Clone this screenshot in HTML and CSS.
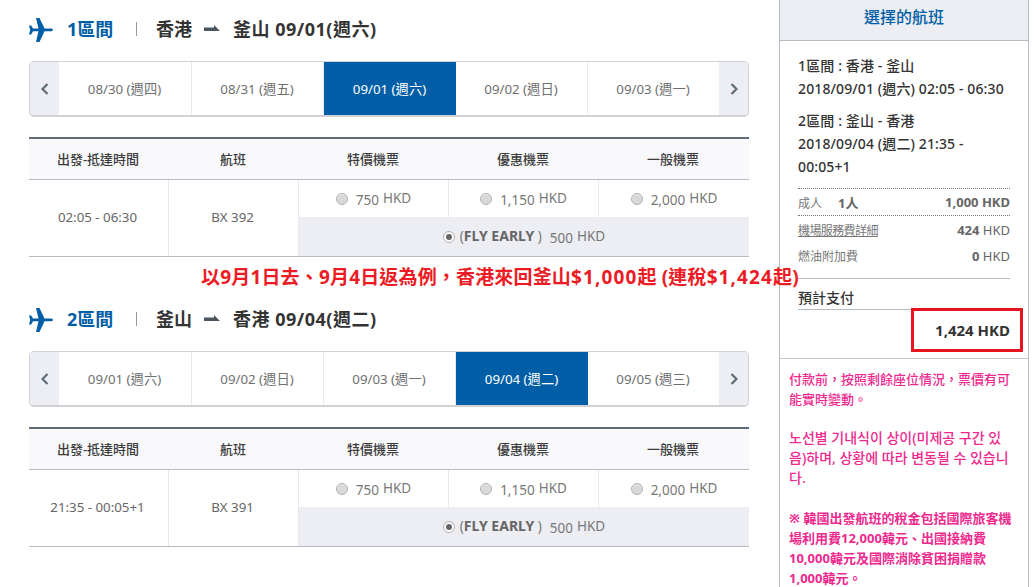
FILE: index.html
```html
<!DOCTYPE html>
<html lang="zh-Hant">
<head>
<meta charset="utf-8">
<title>選擇的航班</title>
<link rel="stylesheet" href="styles.css">
</head>
<body>
<div class="page">
  <main class="main">
    <section class="leg">
      <h2 class="leg-title">
        <svg class="plane" viewBox="0 0 24 24"><path d="M24 11.9 C24 11 22.5 10.5 21 10.5 L15.5 10.5 L10.5 0 L7 0 L9.5 10.5 L4 10.5 L2.2 7.5 L0 7.5 L1.2 11.9 L0 16.5 L2.2 16.5 L4 13.3 L9.5 13.3 L7 24 L10.5 24 L15.5 13.3 L21 13.3 C22.5 13.3 24 12.8 24 11.9 Z"/></svg>
        <span class="leg-no">1區間</span>
        <span class="leg-sep"></span>
        <span>香港</span>
        <svg class="arrow" viewBox="0 0 16 6"><path d="M0 2.5 H10 V0 L16 6 H0 Z"/></svg>
        <span class="dest">釜山 09/01(週六)</span>
      </h2>
      <nav class="dates">
        <span class="nav-btn"><svg viewBox="0 0 8 12"><path d="M6.5 1 L1.5 6 L6.5 11"/></svg></span>
        <span class="date">08/30 (週四)</span>
        <span class="date">08/31 (週五)</span>
        <span class="date on">09/01 (週六)</span>
        <span class="date">09/02 (週日)</span>
        <span class="date">09/03 (週一)</span>
        <span class="nav-btn"><svg viewBox="0 0 8 12"><path d="M1.5 1 L6.5 6 L1.5 11"/></svg></span>
      </nav>
      <div class="fares">
        <div class="th">出發-抵達時間</div><div class="th">航班</div><div class="th">特價機票</div><div class="th">優惠機票</div><div class="th">一般機票</div>
        <div class="td time">02:05 - 06:30</div>
        <div class="td flight">BX 392</div>
        <div class="td opt"><i class="radio"></i><span class="num">750</span> HKD</div>
        <div class="td opt"><i class="radio"></i><span class="num">1,150</span> HKD</div>
        <div class="td opt last"><i class="radio"></i><span class="num">2,000</span> HKD</div>
        <div class="td early"><i class="radio sel"></i>(<b>FLY EARLY</b>&nbsp;)<span class="num n2">500</span> HKD</div>
      </div>
    </section>
    <p class="promo">以9月1日去、9月4日返為例，香港來回釜山<span class="money">$1,000</span>起 (連稅<span class="money">$1,424</span>起)</p>
    <section class="leg">
      <h2 class="leg-title">
        <svg class="plane" viewBox="0 0 24 24"><path d="M24 11.9 C24 11 22.5 10.5 21 10.5 L15.5 10.5 L10.5 0 L7 0 L9.5 10.5 L4 10.5 L2.2 7.5 L0 7.5 L1.2 11.9 L0 16.5 L2.2 16.5 L4 13.3 L9.5 13.3 L7 24 L10.5 24 L15.5 13.3 L21 13.3 C22.5 13.3 24 12.8 24 11.9 Z"/></svg>
        <span class="leg-no">2區間</span>
        <span class="leg-sep"></span>
        <span>釜山</span>
        <svg class="arrow" viewBox="0 0 16 6"><path d="M0 2.5 H10 V0 L16 6 H0 Z"/></svg>
        <span class="dest">香港 09/04(週二)</span>
      </h2>
      <nav class="dates">
        <span class="nav-btn"><svg viewBox="0 0 8 12"><path d="M6.5 1 L1.5 6 L6.5 11"/></svg></span>
        <span class="date">09/01 (週六)</span>
        <span class="date">09/02 (週日)</span>
        <span class="date">09/03 (週一)</span>
        <span class="date on">09/04 (週二)</span>
        <span class="date">09/05 (週三)</span>
        <span class="nav-btn"><svg viewBox="0 0 8 12"><path d="M1.5 1 L6.5 6 L1.5 11"/></svg></span>
      </nav>
      <div class="fares">
        <div class="th">出發-抵達時間</div><div class="th">航班</div><div class="th">特價機票</div><div class="th">優惠機票</div><div class="th">一般機票</div>
        <div class="td time">21:35 - 00:05+1</div>
        <div class="td flight">BX 391</div>
        <div class="td opt"><i class="radio"></i><span class="num">750</span> HKD</div>
        <div class="td opt"><i class="radio"></i><span class="num">1,150</span> HKD</div>
        <div class="td opt last"><i class="radio"></i><span class="num">2,000</span> HKD</div>
        <div class="td early"><i class="radio sel"></i>(<b>FLY EARLY</b>&nbsp;)<span class="num n2">500</span> HKD</div>
      </div>
    </section>
  </main>
  <aside class="side">
    <h3 class="side-head">選擇的航班</h3>
    <div class="side-body">
      <div class="trips">
        <p class="trip">1區間 : 香港 - 釜山<br>2018/09/01 (週六) 02:05 - 06:30</p>
        <p class="trip">2區間 : 釜山 - 香港<br>2018/09/04 (週二) 21:35 - 00:05+1</p>
      </div>
      <div class="row adult"><span class="lbl">成人<b class="pax">1人</b></span><span><b>1,000 HKD</b></span></div>
      <div class="row tax"><span class="lbl link">機場服務費詳細</span><span><b>424</b> HKD</span></div>
      <div class="row fuel"><span class="lbl">燃油附加費</span><span><b>0</b> HKD</span></div>
      <div class="total-label">預計支付</div>
      <div class="total">1,424 HKD</div>
      <div class="redbox"></div>
    </div>
    <div class="notes">
      <p>付款前，按照剩餘座位情況，票價有可能實時變動。</p>
      <p class="ko">노선별 기내식이 상이(미제공 구간 있음)하며, 상황에 따라 변동될 수 있습니다.</p>
      <p class="em">※ 韓國出發航班的稅金包括國際旅客機場利用費12,000韓元、出國接納費10,000韓元及國際消除貧困捐贈款1,000韓元。</p>
    </div>
  </aside>
</div>
</body>
</html>
```
FILE: styles.css
```css
* { box-sizing: border-box; }
html, body { margin: 0; height: 587px; overflow: hidden; background: #fff; }
body {
  font-family: "Noto Sans", "Noto Sans CJK TC", sans-serif;
  font-size: 13px;
  color: #666;
}
p, h2, h3 { margin: 0; }
.page { display: flex; width: 1036px; height: 587px; position: relative; }
.main { width: 720px; margin-left: 29px; flex: none; }
.leg { height: 257px; }
.leg-title {
  display: flex; align-items: center; height: 61px; padding-bottom: 3px;
  font-size: 18px; font-weight: 700; color: #333; line-height: 58px;
}
.plane { width: 24px; height: 24px; fill: #005ea6; flex: none; margin-top: 2px; }
.leg-no { color: #005ea6; font-weight: 700; margin-left: 14px; width: 48px; }
.leg-sep { width: 1px; height: 14px; background: #999; margin: 0 19px 0 21px; }
.arrow { width: 16px; height: 6px; fill: #4a5560; margin: 0 13px 2px 12px; }
.dest { letter-spacing: 0.5px; }
.dates {
  display: grid; grid-template-columns: 29px 133px 132px 132px 132px 131px 29px;
  height: 56px; border: 1px solid #d0d2d6; border-bottom-width: 2px; border-radius: 5px; overflow: hidden;
}
.nav-btn { background: #edeef3; display: flex; align-items: center; justify-content: center; }
.nav-btn svg { width: 8px; height: 12px; fill: none; stroke: #5f6b76; stroke-width: 2.2; }
.date { display: flex; align-items: center; justify-content: center; border-right: 1px solid #e8e8ec; font-size: 13.3px; color: #6f6f6f; padding-right: 1px; }
.date:nth-last-child(2) { border-right: 0; }
.date.on { background: #005ea6; color: #fff; border-right: 0; }
.fares {
  margin-top: 20px; display: grid;
  grid-template-columns: 140px 130px 150px 150px 150px;
  grid-template-rows: 41px 37px 39px;
  border-top: 2px solid #5f6b76; border-bottom: 1px solid #b5bcc4; height: 120px;
}
.th {
  background: #f9f9fc; border-bottom: 1px solid #b5bcc4; padding: 0 2px 2px 0;
  display: flex; align-items: center; justify-content: center; font-weight: 500; color: #3c3c3c; font-size: 13px;
}
.td { display: flex; align-items: center; justify-content: center; font-size: 13.5px; }
.time, .flight { grid-row: span 2; border-right: 1px solid #e8e8ec; color: #666; padding: 0 2px 2px 0; font-size: 13.3px; }
.opt { border-right: 1px solid #e8e8ec; color: #777; padding-bottom: 2px; }
.opt.last { border-right: 0; }
.early { grid-column: 3 / 6; background: #edeef3; color: #777; padding-bottom: 2px; }
.early b { font-weight: 700; color: #666; font-size: 14px; }
.radio {
  width: 12px; height: 12px; border-radius: 50%; margin: 2px 8px 0 0; flex: none;
  background: #d8d8d8; border: 1px solid #b0b0b0; position: relative; display: block;
  box-shadow: inset 0 1px 1px #eee;
}
.radio.sel { background: #fff; margin-right: 5px; }
.radio.sel::after { content: ""; position: absolute; left: 2px; top: 2px; width: 6px; height: 6px; border-radius: 50%; background: #666; }
.num { padding-top: 5px; margin-right: 4px; white-space: pre; }
.n2 { margin-left: 8px; }
.promo {
  position: absolute; left: 201px; top: 265px; white-space: nowrap; letter-spacing: 0.17px;
  font-size: 19px; font-weight: 700; line-height: 24px; color: #ed1c24;
}
.money { letter-spacing: 1.1px; }
.leg + .promo + .leg { margin-top: 33px; }
.side {
  margin-left: 30px; width: 250px; flex: none; height: 587px;
  border-left: 1px solid #b5bcc4; border-right: 1px solid #b5bcc4;
}
.side-head {
  height: 41px; background: #edeef3; border-bottom: 1px solid #b5bcc4; text-align: center;
  font-size: 16px; font-weight: 500; line-height: 34px; color: #005ea6;
}
.side-body { padding: 0 18px; height: 318px; border-bottom: 1px solid #c5cad0; position: relative; }
.trips { height: 148px; padding-top: 13px; border-bottom: 1px dotted #777; font-weight: 500; color: #333; font-size: 14px; letter-spacing: 0.12px; }
.trip { line-height: 23px; margin-bottom: 9px; }
.row { display: flex; justify-content: space-between; align-items: center; height: 27px; }
.row b { font-weight: 700; color: #666; }
.lbl { font-size: 12px; color: #777; }
.pax { margin-left: 16px; font-size: 13px; }
.adult { border-bottom: 1px dotted #777; }
.tax { height: 26px; margin-top: 1px; }
.fuel { height: 26px; }
.link { text-decoration: underline; letter-spacing: -0.6px; }
.total-label {
  margin-top: 9px; height: 32px; padding-top: 9px; border-top: 1px solid #b5bcc4;
  font-weight: 500; color: #333; border-bottom: 1px solid #b5bcc4; line-height: 20px; font-size: 14px;
}
.total { text-align: right; font-weight: 700; color: #333; font-size: 15px; line-height: 40px; }
.redbox { position: absolute; left: 131px; top: 267px; width: 112px; height: 44px; border: 3px solid #e8141f; }
.notes { padding: 10px 14px 0 9px; color: #ee2a8e; font-weight: 500; line-height: 20px; }
.notes p { margin-bottom: 19px; }
.notes .ko { font-size: 14px; margin-bottom: 20px; }
.notes .em { font-weight: 700; }
```
